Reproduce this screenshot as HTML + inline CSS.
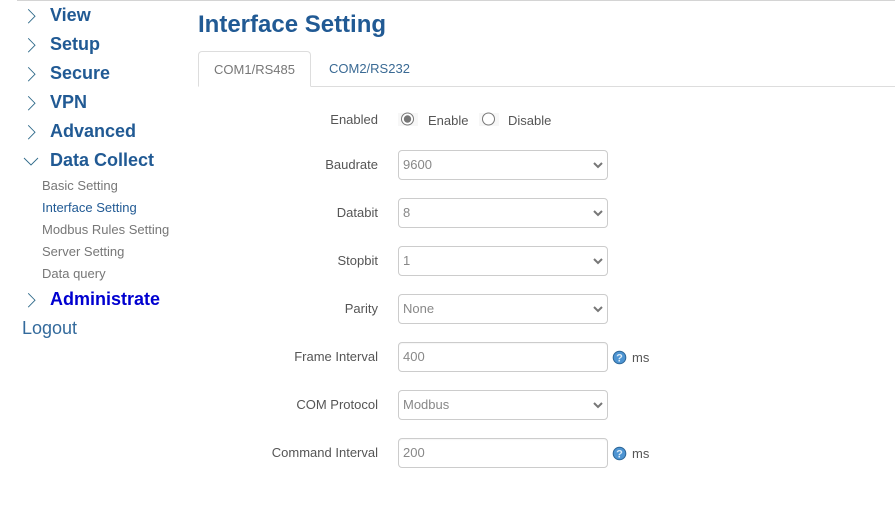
<!DOCTYPE html>
<html><head><meta charset="utf-8">
<style>
html,body{margin:0;padding:0;background:#fff;width:895px;height:511px;overflow:hidden}
body{font-family:"Liberation Sans",Arial,sans-serif;position:relative}
.a{position:absolute;white-space:nowrap}
.m{left:50px;font-size:18px;font-weight:bold;color:#215a94;line-height:20px}
.s{left:42px;font-size:13px;color:#777;line-height:16px}
.l{font-size:13px;color:#555;line-height:16px;right:517px;text-align:right}
.f{left:398px;width:210px;height:30px;box-sizing:border-box;border:1px solid #ccc;border-radius:4px;background:#fff;font-size:13px;color:#888;line-height:27px;padding-left:4px;box-shadow:inset 0 1px 1px rgba(0,0,0,.04)}
.sel{box-shadow:none}
.sel svg{position:absolute;left:194px;top:11px}
svg.c{position:absolute}
.ms{left:632px;font-size:13px;color:#555;line-height:16px}
.t{font-size:13px;color:#555;line-height:16px}
</style></head><body>
<div class="a" style="left:17px;top:0;width:878px;height:1px;background:#d4d4d4"></div>

<svg class="c" style="left:27px;top:9px" width="10" height="15"><path d="M1.2 0.3L8 7.2L1.2 14.2" fill="none" stroke="#2f6a8a" stroke-width="0.9"/></svg>
<svg class="c" style="left:27px;top:38px" width="10" height="15"><path d="M1.2 0.3L8 7.2L1.2 14.2" fill="none" stroke="#2f6a8a" stroke-width="0.9"/></svg>
<svg class="c" style="left:27px;top:67px" width="10" height="15"><path d="M1.2 0.3L8 7.2L1.2 14.2" fill="none" stroke="#2f6a8a" stroke-width="0.9"/></svg>
<svg class="c" style="left:27px;top:96px" width="10" height="15"><path d="M1.2 0.3L8 7.2L1.2 14.2" fill="none" stroke="#2f6a8a" stroke-width="0.9"/></svg>
<svg class="c" style="left:27px;top:125px" width="10" height="15"><path d="M1.2 0.3L8 7.2L1.2 14.2" fill="none" stroke="#2f6a8a" stroke-width="0.9"/></svg>
<svg class="c" style="left:23px;top:157px" width="16" height="10"><path d="M1 1L8 8L15 1" fill="none" stroke="#2f6a8a" stroke-width="0.9"/></svg>
<svg class="c" style="left:27px;top:293px" width="10" height="15"><path d="M1.2 0.3L8 7.2L1.2 14.2" fill="none" stroke="#2f6a8a" stroke-width="0.9"/></svg>

<div class="a m" style="top:5px">View</div>
<div class="a m" style="top:34px">Setup</div>
<div class="a m" style="top:63px">Secure</div>
<div class="a m" style="top:92px">VPN</div>
<div class="a m" style="top:121px">Advanced</div>
<div class="a m" style="top:150px">Data Collect</div>
<div class="a s" style="top:178px">Basic Setting</div>
<div class="a s" style="top:200px;color:#215a94">Interface Setting</div>
<div class="a s" style="top:222px">Modbus Rules Setting</div>
<div class="a s" style="top:244px">Server Setting</div>
<div class="a s" style="top:266px">Data query</div>
<div class="a m" style="top:289px;color:#0000d0">Administrate</div>
<div class="a" style="left:22px;top:317px;font-size:18px;line-height:22px;color:#336a9c">Logout</div>

<div class="a" style="left:198px;top:11px;font-size:24px;font-weight:bold;line-height:28px;color:#215a94">Interface Setting</div>

<div class="a" style="left:198px;top:86px;width:697px;height:1px;background:#ddd"></div>
<div class="a" style="left:198px;top:51px;width:113px;height:36px;box-sizing:border-box;border:1px solid #ddd;border-bottom:1px solid #fff;border-radius:4px 4px 0 0;background:#fff;font-size:13px;color:#777;line-height:35px;text-align:center">COM1/RS485</div>
<div class="a" style="left:329px;top:60px;font-size:13px;color:#3a6a94;line-height:18px">COM2/RS232</div>

<div class="a l" style="top:112px">Enabled</div>
<div class="a" style="left:398px;top:113px;width:20px;height:13px;background:#f7f7f7"></div>
<svg class="c" style="left:400px;top:112px" width="16" height="15"><circle cx="7.5" cy="7" r="6" fill="#fff" stroke="#777"/><circle cx="7.5" cy="7" r="3.7" fill="#777"/></svg>
<div class="a t" style="left:428px;top:113px">Enable</div>
<div class="a" style="left:479px;top:113px;width:20px;height:13px;background:#f7f7f7"></div>
<svg class="c" style="left:481px;top:112px" width="16" height="15"><circle cx="7.5" cy="7" r="6" fill="#fff" stroke="#777"/></svg>
<div class="a t" style="left:508px;top:113px">Disable</div>

<div class="a l" style="top:157px">Baudrate</div>
<div class="a f sel" style="top:150px">9600<svg width="10" height="7"><path d="M1 1L5 5L9 1" fill="none" stroke="#777" stroke-width="2"/></svg></div>
<div class="a l" style="top:205px">Databit</div>
<div class="a f sel" style="top:198px">8<svg width="10" height="7"><path d="M1 1L5 5L9 1" fill="none" stroke="#777" stroke-width="2"/></svg></div>
<div class="a l" style="top:253px">Stopbit</div>
<div class="a f sel" style="top:246px">1<svg width="10" height="7"><path d="M1 1L5 5L9 1" fill="none" stroke="#777" stroke-width="2"/></svg></div>
<div class="a l" style="top:301px">Parity</div>
<div class="a f sel" style="top:294px">None<svg width="10" height="7"><path d="M1 1L5 5L9 1" fill="none" stroke="#777" stroke-width="2"/></svg></div>
<div class="a l" style="top:349px">Frame Interval</div>
<div class="a f" style="top:342px">400</div>
<svg class="c" style="left:612px;top:350px" width="15" height="15"><circle cx="7.5" cy="7.5" r="6.3" fill="#4d94d2" stroke="#2a6496"/><text x="7.5" y="11.5" font-family="Liberation Sans" font-size="11" font-weight="bold" fill="#dcebf7" text-anchor="middle">?</text></svg>
<div class="a ms" style="top:350px">ms</div>
<div class="a l" style="top:397px">COM Protocol</div>
<div class="a f sel" style="top:390px">Modbus<svg width="10" height="7"><path d="M1 1L5 5L9 1" fill="none" stroke="#777" stroke-width="2"/></svg></div>
<div class="a l" style="top:445px">Command Interval</div>
<div class="a f" style="top:438px">200</div>
<svg class="c" style="left:612px;top:446px" width="15" height="15"><circle cx="7.5" cy="7.5" r="6.3" fill="#4d94d2" stroke="#2a6496"/><text x="7.5" y="11.5" font-family="Liberation Sans" font-size="11" font-weight="bold" fill="#dcebf7" text-anchor="middle">?</text></svg>
<div class="a ms" style="top:446px">ms</div>
</body></html>
